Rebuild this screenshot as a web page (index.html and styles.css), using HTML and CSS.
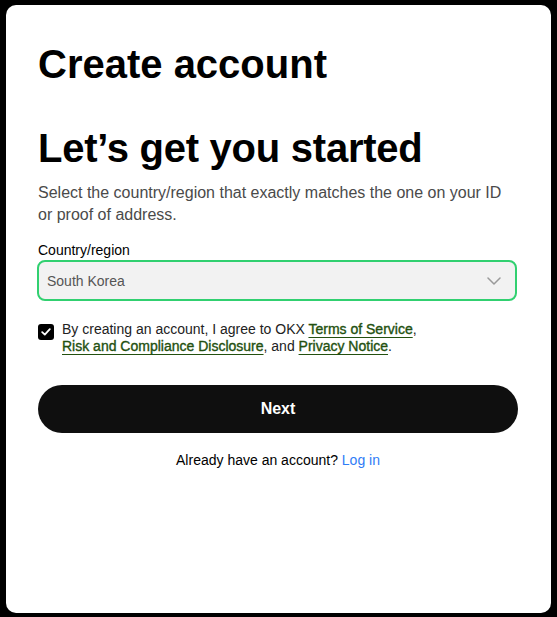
FILE: index.html
```html
<!DOCTYPE html>
<html lang="en">
<head>
  <meta charset="UTF-8" />
  <meta name="viewport" content="width=device-width, initial-scale=1" />
  <title>Create account</title>
  <link rel="stylesheet" href="styles.css">
</head>
<body>

  <div class="card">
    <h1 class="title">Create account</h1>

    <h2 class="heading">Let’s get you started</h2>
    <p class="subtitle">Select the country/region that exactly matches the one on your ID or proof of address.</p>

    <div class="field-label">Country/region</div>
    <div class="select">
      <span>South Korea</span>
      <svg class="chevron" width="14" height="8" viewBox="0 0 14 8">
        <path d="M1 1l6 6 6-6" fill="none" stroke="#9a9a9a" stroke-width="1.5" stroke-linecap="round" stroke-linejoin="round"/>
      </svg>
    </div>

    <div class="agree">
      <span class="checkbox">
        <svg width="10" height="8" viewBox="0 0 10 8">
          <path d="M1.2 4.2l2.6 2.4L8.8 1.2" fill="none" stroke="#fff" stroke-width="1.8" stroke-linecap="round" stroke-linejoin="round"/>
        </svg>
      </span>
      <p>By creating an account, I agree to OKX <a href="#">Terms of Service</a>,<br><a href="#">Risk and Compliance Disclosure</a>, and <a href="#">Privacy Notice</a>.</p>
    </div>

    <button class="btn">Next</button>

    <p class="login">Already have an account? <a href="#">Log in</a></p>
  </div>

</body>
</html>
```

FILE: styles.css
```css
body {
  margin: 0;
  background: #000;
  font-family: "Liberation Sans", Arial, sans-serif;
  color: #000;
}

.card {
  margin: 5px 6px;
  height: 608px;
  box-sizing: border-box;
  padding: 35px 33px 0 32px;
  background: #fff;
  border-radius: 10px;
}

.title,
.heading {
  margin: 0;
  font-size: 40px;
  line-height: 48px;
  font-weight: bold;
}

.heading {
  margin-top: 36px;
  letter-spacing: -0.25px;
}

.subtitle {
  margin: 10px 0 14px;
  font-size: 16px;
  line-height: 22px;
  color: #4a4a4a;
}

.field-label {
  font-size: 14px;
  line-height: 20px;
}

.select {
  display: flex;
  align-items: center;
  justify-content: space-between;
  height: 41px;
  box-sizing: border-box;
  padding: 0 14px 0 8px;
  margin: 0 1px 0 -1px;
  background: #f2f2f2;
  border: 2px solid #31d070;
  border-radius: 8px;
  font-size: 14px;
  color: #555;
}

.agree {
  display: flex;
  gap: 8px;
  margin-top: 20px;
}

.checkbox {
  display: flex;
  align-items: center;
  justify-content: center;
  flex: none;
  width: 16px;
  height: 16px;
  margin-top: 3px;
  background: #000;
  border-radius: 3px;
}

.agree p {
  margin: 0;
  font-size: 14px;
  line-height: 16.5px;
  color: #222;
}

.agree a {
  color: #23500f;
  -webkit-text-stroke: 0.35px #23500f;
  text-decoration: underline;
  text-underline-offset: 3px;
}

.btn {
  display: block;
  width: 100%;
  height: 48px;
  margin-top: 31px;
  background: #0f0f0f;
  color: #fff;
  border: none;
  border-radius: 24px;
  font-family: inherit;
  font-size: 16px;
  font-weight: bold;
}

.login {
  margin: 17px 0 0;
  text-align: center;
  font-size: 14px;
  line-height: 20px;
}

.login a {
  color: #2f7cf6;
  text-decoration: none;
}
```
